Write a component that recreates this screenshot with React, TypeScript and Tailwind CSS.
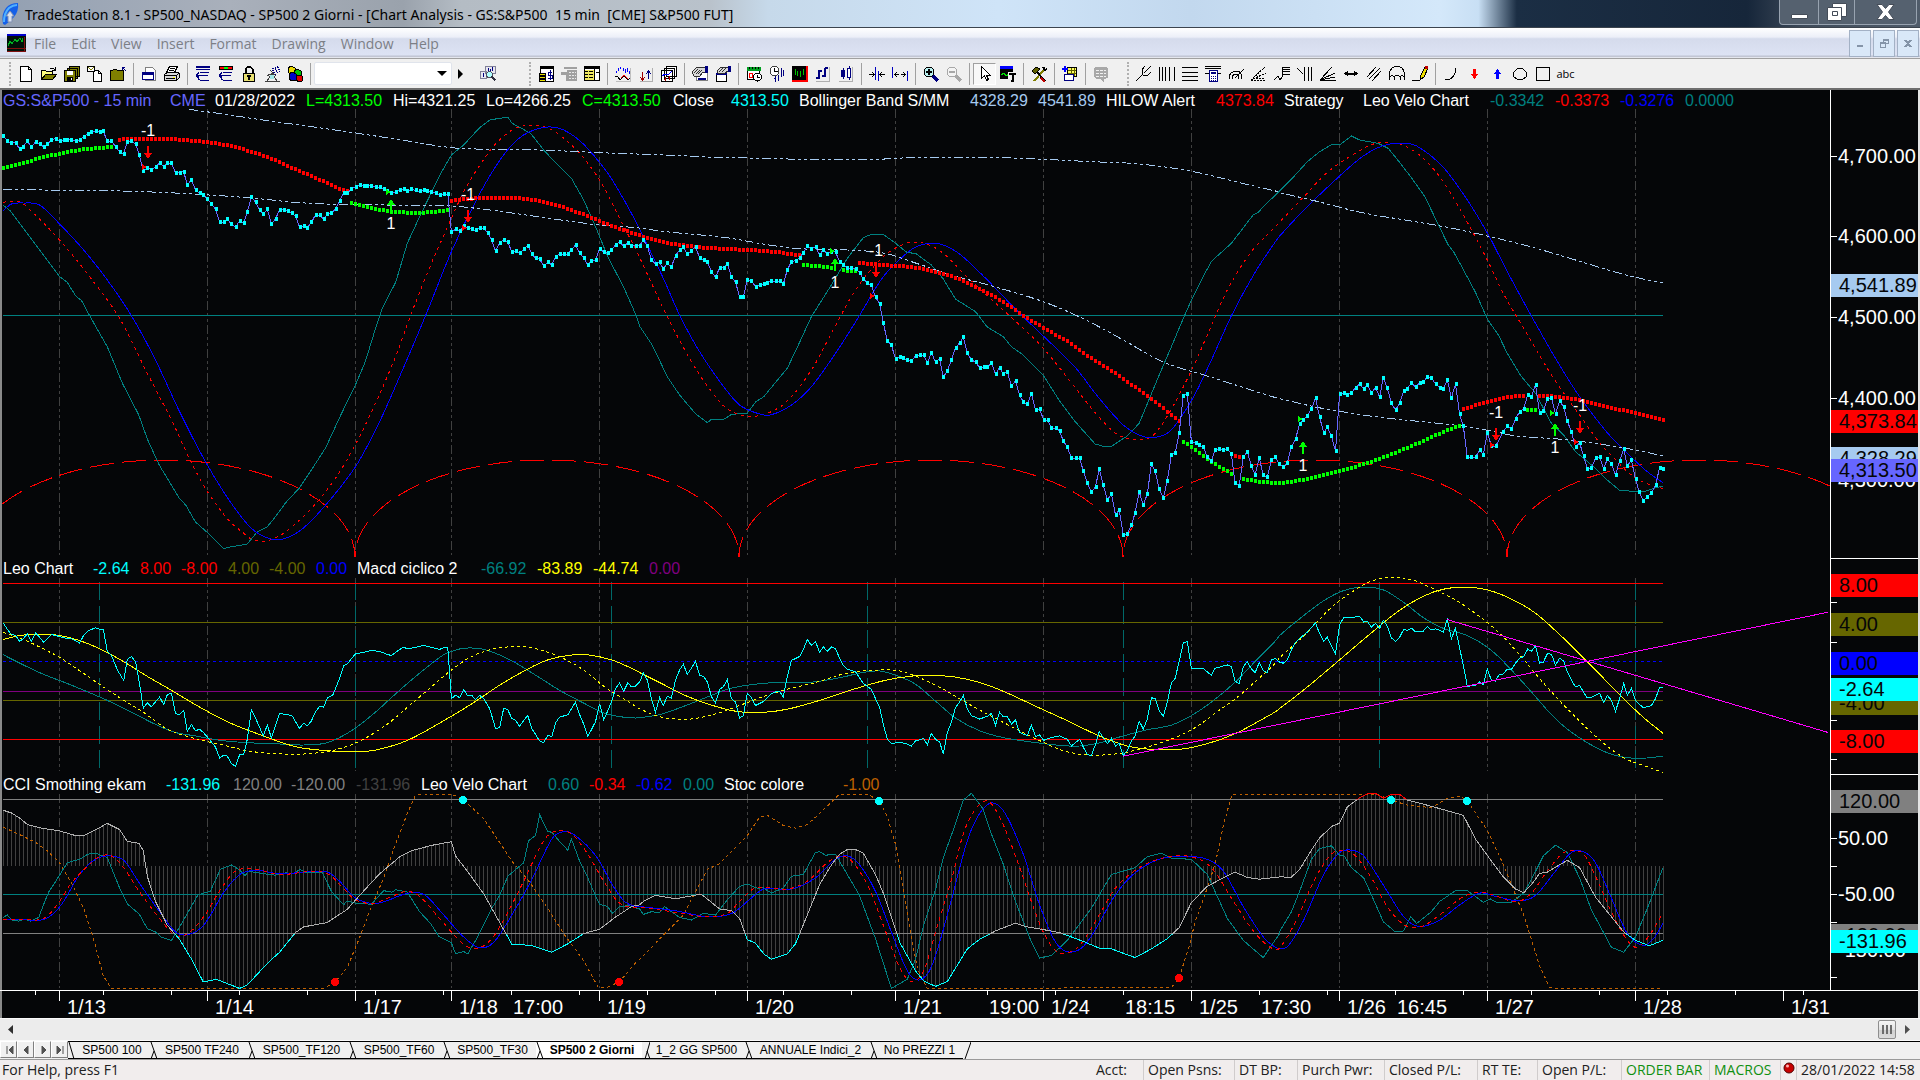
import { type ReactNode } from 'react'

type Point = [number, number];

// Series are kept in blocks of 1568 units, each block covers 640px of the time axis
const BLOCK = 1568;
const X_UNIT = 2.45;
const END_X = 1663;

interface Scale {
    unit: number;
    offset: number;
}

const PRICE: Scale = { unit: 3, offset: 19 };
const LEO: Scale = { unit: 2.9585, offset: 28 };
const CCI: Scale = { unit: 2.9585, offset: 244 };

const toY = (value: number, scale: Scale) => value / scale.unit - scale.offset;

const project = (blocks: string[], scale: Scale): Point[] =>
    blocks.flatMap((block, index) =>
        block.split(" ").filter(Boolean).map((pair): Point => {
            const [x, y] = pair.split(",").map(Number);
            return [(x + index * BLOCK) / X_UNIT, toY(y, scale)];
        })
    );

const straight = (points: Point[]) =>
    points.map(([x, y], i) => `${i ? "L" : "M"}${x.toFixed(1)} ${y.toFixed(1)}`).join("");

const smooth = (points: Point[]) => {
    let d = `M${points[0][0].toFixed(1)} ${points[0][1].toFixed(1)}`;
    for (let i = 0; i < points.length - 1; i++) {
        const p0 = points[i - 1] ?? points[i];
        const p1 = points[i];
        const p2 = points[i + 1];
        const p3 = points[i + 2] ?? p2;
        const third = (p2[0] - p1[0]) / 3;
        const s1 = (p2[1] - p0[1]) / (p2[0] - p0[0] || 1);
        const s2 = (p3[1] - p1[1]) / (p3[0] - p1[0] || 1);
        d += `C${(p1[0] + third).toFixed(1)} ${(p1[1] + s1 * third).toFixed(1)} ${(p2[0] - third).toFixed(1)} ${(p2[1] - s2 * third).toFixed(1)} ${p2[0].toFixed(1)} ${p2[1].toFixed(1)}`;
    }
    return d;
};

const valueAt = (points: Point[], x: number) => {
    const i = points.findIndex((p) => p[0] >= x);
    if (i <= 0) return points[i === 0 ? 0 : points.length - 1][1];
    const [x0, y0] = points[i - 1];
    const [x1, y1] = points[i];
    return y0 + ((y1 - y0) * (x - x0)) / (x1 - x0);
};

const closes = [
    "8,137 18,153 28,160 38,158 48,176 57,170 67,153 77,170 87,156 97,163 107,170 116,163 126,149 136,146 146,152 156,150 165,149 175,149 185,152 195,150 205,141 215,131 224,127 234,122 244,125 253,124 263,153 273,153 283,170 293,185 303,191 312,156 322,154 332,161 341,195 351,243 361,234 371,239 381,230 391,219 401,230 410,219 420,219 430,248 440,248 450,245 459,284 469,270 479,300 489,309 498,315 508,327 518,342 528,357 538,396 548,396 557,387 567,403 577,411 587,393 597,399 606,366 616,321 626,336 636,361 645,371 655,358 665,402 675,387 685,359 695,359 705,363 715,369 724,378 734,411 744,408 753,413 763,397 773,375 783,375 793,387 802,372 812,369 822,357 832,333 842,309 851,309 861,297 871,290 881,285 891,288 900,287 910,288 920,291 930,292 940,298 949,303 959,309 969,306 979,301 989,297 998,303 1008,298 1018,301 1028,304 1038,300 1047,303 1057,306 1067,309 1077,315 1087,312 1097,312 1106,426 1116,418 1126,422 1136,407 1146,415 1156,418 1165,421 1175,414 1185,415 1195,428 1205,450 1214,484 1224,459 1234,450 1244,456 1254,486 1263,483 1273,489 1283,478 1293,467 1303,492 1312,504 1322,507 1332,528 1342,516 1352,525 1361,501 1371,492 1381,493 1391,492 1400,480 1410,465 1420,489 1430,504 1440,524 1449,513 1459,510 1469,477 1479,485 1489,488 1498,480 1508,465 1518,456 1528,468 1538,459 1547,468 1557,467 1567,467",
    "8,450 18,468 28,510 38,522 48,516 57,537 67,520 77,531 87,497 97,480 106,471 116,492 126,483 136,470 146,503 156,510 165,515 175,545 185,561 195,534 205,533 214,521 224,560 234,576 244,621 253,621 263,569 273,573 283,590 293,586 303,582 312,578 322,573 332,573 342,573 351,582 361,540 371,515 381,512 391,503 400,489 410,467 420,477 430,470 440,495 449,479 459,492 469,485 479,486 489,515 498,525 508,534 518,534 528,537 538,548 547,567 557,579 567,585 577,621 587,642 596,699 606,752 616,765 626,807 636,800 645,804 655,810 665,813 675,798 685,795 695,795 704,819 714,788 724,816 734,806 743,862 753,843 763,810 773,773 783,759 792,741 802,788 812,810 822,816 832,833 842,831 851,831 861,819 871,852 881,833 890,852 900,846 910,887 920,873 930,915 939,936 949,942 959,912 969,960 979,957 989,990 999,990 1008,1014 1018,1014 1028,1022 1037,1053 1047,1071 1057,1104 1067,1104 1077,1104 1086,1143 1096,1179 1106,1206 1116,1191 1125,1136 1135,1185 1145,1230 1155,1212 1165,1275 1174,1260 1184,1335 1194,1332 1204,1305 1213,1269 1223,1206 1233,1245 1243,1212 1253,1122 1262,1143 1272,1197 1282,1224 1292,1173 1302,1095 1311,1089 1321,1029 1331,917 1341,912 1351,1056 1361,1058 1370,1065 1380,1071 1390,1101 1400,1113 1409,1080 1419,1077 1429,1080 1439,1077 1449,1092 1458,1180 1468,1188 1478,1101 1488,1085 1498,1128 1507,1155 1517,1104 1527,1155 1537,1161 1547,1110 1556,1101 1566,1122",
    "8,1131 18,1119 28,1071 38,1047 48,1002 57,990 67,978 77,957 87,924 97,981 107,1029 116,1011 126,1038 136,1083 146,912 156,909 165,915 175,909 185,893 195,882 205,896 214,885 224,909 234,893 244,921 253,863 263,894 273,939 283,960 293,939 303,903 312,896 322,878 332,891 342,879 351,876 361,860 371,863 381,882 391,893 400,897 410,870 420,923 430,882 440,972 449,1008 459,1101 469,1101 479,1101 489,1080 498,1095 508,1028 518,1068 528,1069 547,1026 557,1007 567,1017 577,987 587,965 597,957 607,914 616,920 626,885 636,969 645,963 655,927 665,924 675,972 685,933 695,951 704,993 714,1026 724,1071 734,1059 744,1098 753,1137 763,1134 773,1104 783,1101 793,1137 802,1107 812,1122 822,1155 832,1113 842,1077 851,1128 861,1110 871,1167 880,1206 890,1233 900,1220 910,1209 920,1185 930,1134 938,1137",
];

const upperBand = [
    "463,58 557,74 655,92 763,110 871,129 979,149 1106,173 1200,178 1322,180 1469,188 1560,192",
    "8,194 87,196 165,201 263,204 410,208 577,208 680,202 851,202 988,208 1106,215 1224,222 1351,244 1469,278 1560,304",
    "0,308 87,333 205,369 322,393 410,412 508,438 616,471 724,510 832,550 890,567 938,579",
];

const middleBand = [
    "8,298 107,300 263,302 391,307 499,314 616,324 734,338 861,344 1087,347 1175,356 1293,376 1410,396 1469,405 1560,413",
    "8,416 87,428 205,442 312,464 391,476 508,480 600,490 675,519 763,555 871,591 988,635 1086,686 1184,750 1282,816 1390,858 1469,889 1560,924",
    "0,926 87,951 156,966 253,983 440,1007 528,1025 577,1038 680,1047 783,1062 871,1080 938,1098",
];

const velo = [
    "8,346 25,362 48,400 97,480 146,560 165,577 185,617 200,632 220,678 263,770 300,880 340,975 361,1047 390,1125 440,1226 455,1245 479,1296 515,1335 548,1376 567,1370 605,1363 630,1326 655,1310 675,1280 700,1238 734,1193 763,1140 798,1073 835,975 871,884 895,815 915,735 935,660 970,575 998,460 1028,380 1080,250 1106,195 1136,165 1175,113 1200,90 1224,85 1244,82 1255,100 1300,130 1332,180 1361,218 1400,265 1430,330 1459,410 1489,500 1528,592 1560,680",
    "0,710 30,765 67,860 97,915 136,971 165,998 175,988 205,988 225,973 263,970 283,936 303,920 361,835 391,757 420,680 469,585 508,505 547,443 567,433 596,433 626,460 655,488 675,490 714,525 743,567 773,627 822,665 851,711 890,740 910,770 939,795 988,856 1028,933 1067,996 1115,1062 1135,1069 1155,1069 1194,1038 1223,1000 1272,855 1302,770 1326,700 1351,630 1385,548 1400,514 1449,460 1502,375 1515,367 1530,346 1560,312",
    "0,302 28,268 67,215 97,185 126,164 146,165 175,138 195,150 240,160 265,175 293,217 320,260 355,320 391,412 412,465 425,485 440,518 479,607 508,687 535,735 557,790 590,857 626,910 665,1000 695,1035 724,1085 773,1135 802,1170 832,1201 890,1206 920,1193 938,1189",
];

const veloFast = [
    "8,337 28,334 48,335 67,352 146,450 224,567 293,685 361,850 420,990 469,1118 508,1204 557,1286 597,1330 616,1347 655,1352 700,1325 763,1255 820,1168 871,1063 920,940 969,800 1008,670 1057,520 1106,385 1136,305 1175,227 1214,162 1263,115 1312,106 1341,114 1371,135 1420,190 1469,270 1508,360 1560,485",
    "0,505 67,680 136,835 195,935 225,965 268,979 312,970 361,933 420,840 469,730 528,600 596,500 645,463 675,457 704,463 743,490 802,562 861,628 939,715 988,775 1057,878 1106,955 1155,1020 1184,1042 1214,1049 1253,1040 1292,978 1351,842 1390,735 1439,600 1498,485 1555,412",
    "0,395 57,322 116,247 175,197 229,162 268,159 300,165 351,205 400,275 449,375 508,510 547,610 597,715 655,835 704,925 734,975 783,1058 822,1108 851,1145 890,1176 938,1196",
];

const veloSlow = [
    "8,362 28,342 57,339 97,345 146,402 205,480 263,570 322,677 381,810 440,965 508,1125 577,1258 626,1325 680,1349 734,1323 793,1252 871,1130 930,995 979,860 1045,670 1106,485 1165,335 1214,230 1254,165 1293,128 1342,111 1381,120 1430,163 1489,250 1528,328 1560,400",
    "8,440 57,565 99,680 146,785 205,890 244,945 293,972 322,974 371,945 420,890 479,790 537,678 596,560 655,488 690,464 734,462 783,492 851,570 930,670 988,738 1067,833 1125,925 1184,1005 1223,1035 1253,1043 1292,1030 1321,990 1361,910 1400,810 1450,675 1508,545 1555,458",
    "0,437 57,362 146,258 205,197 250,168 293,160 335,168 400,232 459,330 512,438 557,545 616,678 675,805 734,920 802,1028 851,1090 900,1145 938,1178",
];

const redTrails = [
    ["283,150 303,148 361,147 410,147 450,150 508,156 557,166 616,185 665,206 724,239 773,264 832,297 853,303"],
    ["1103,333 1146,326 1205,323 1263,324 1322,333 1371,348 1430,374 1489,404 1538,425 1567,437", "8,441 57,457 116,468 156,473 205,477 273,480 332,486 394,496"],
    ["", "535,519 596,525 665,531 714,542 773,563 832,597 890,636 939,678 988,714 1047,755 1106,806 1174,858 1233,910 1282,956 1324,997"],
    ["", "1456,1097 1473,1102"],
    ["", "", "445,959 498,938 547,923 600,916"],
    ["", "", "632,917 665,919 714,926 763,939 812,954 871,969 942,990"],
];

const greenTrails = [
    ["4,234 57,218 107,201 156,188 205,178 277,170"],
    ["857,338 910,354 959,366 1018,369 1067,366 1100,360"],
    ["", "397,524 430,528 469,534"],
    ["", "494,541 532,545"],
    ["", "1327,1053 1361,1080 1400,1116 1452,1154"],
    ["", "1474,1166 1517,1176 1560,1179", "0,1179 28,1176 77,1164 146,1143 205,1122 263,1098 322,1068 371,1041 410,1020 443,1006"],
    ["", "", "603,960 630,960"],
];

const leoLine = [
    "8,216 18,235 28,250 38,252 48,270 57,262 67,248 77,270 87,245 97,258 107,273 116,262 126,250 140,254 156,260 175,262 195,275 205,252 215,240 234,230 244,234 253,235 263,300 273,312 288,356 303,386 312,324 322,315 332,330 341,390 351,468 361,452 371,464 391,435 401,457 410,428 420,424 430,485 440,486 450,474 459,537 469,516 479,535 489,530 498,540 508,553 518,568 528,583 538,615 548,607 557,610 567,632 577,640 587,606 597,605 606,560 616,472 626,497 645,550 655,518 665,556 675,520 685,483 700,487 715,489 734,528 744,512 753,520 763,506 773,478 783,463 793,465 802,438 815,430 832,380 842,343 851,337 871,307 890,303 910,297 930,300 949,309 959,312 969,303 989,287 998,293 1018,288 1038,282 1057,288 1077,294 1087,289 1097,290 1106,440 1116,430 1126,437 1136,412 1146,432 1156,430 1165,443 1175,430 1185,440 1200,470 1214,528 1224,526 1234,468 1244,473 1254,498 1263,504 1273,522 1283,504 1293,490 1303,528 1312,545 1322,565 1332,570 1342,548 1352,553 1361,512 1371,494 1391,488 1410,450 1420,487 1430,515 1440,550 1449,532 1459,508 1469,455 1479,503 1489,475 1498,450 1508,410 1518,394 1528,418 1538,393 1547,405 1557,403 1567,390",
    "2,383 8,363 18,385 28,440 38,480 48,437 57,460 67,433 77,438 87,385 97,355 106,338 116,368 126,350 136,330 146,370 156,375 165,390 175,433 185,453 195,413 205,403 214,384 224,440 234,450 244,497 253,490 263,424 273,437 283,460 303,448 322,425 332,420 342,418 351,435 361,375 371,327 391,315 400,295 410,265 420,282 430,270 440,303 449,286 459,300 469,287 479,292 489,320 498,342 508,353 528,360 547,395 567,412 577,440 587,465 596,515 606,560 616,573 636,569 655,574 665,580 675,565 695,558 704,576 714,543 724,560 734,568 743,603 753,540 763,510 773,466 783,450 792,430 802,470 812,490 832,500 851,492 861,483 871,518 881,480 890,494 900,492 910,515 920,503 930,540 949,549 959,517 969,552 979,547 989,563 1008,555 1028,550 1047,560 1057,580 1077,560 1086,583 1096,605 1106,608 1116,575 1125,537 1135,555 1145,573 1155,557 1165,580 1174,572 1184,608 1194,593 1204,565 1213,550 1223,506 1233,530 1243,500 1253,437 1262,440 1272,475 1282,492 1292,450 1302,393 1311,380 1321,330 1331,275 1341,270 1351,350 1380,351 1400,371 1409,350 1439,340 1449,345 1458,388 1468,395 1478,345 1488,330 1498,352 1507,363 1517,333 1527,357 1537,362 1547,325 1556,321 1567,332",
    "8,335 18,325 28,295 38,273 48,262 67,243 87,216 97,247 107,270 116,258 136,308 146,220 156,200 175,200 195,196 205,213 214,211 224,228 234,217 244,232 253,208 263,225 273,260 283,270 293,258 303,235 312,238 322,231 332,242 351,240 361,227 371,236 381,233 391,237 400,243 410,205 420,262 430,232 440,290 449,340 459,403 479,401 489,390 498,398 508,353 518,385 528,388 537,368 547,367 557,352 567,353 577,335 587,320 597,315 607,293 616,300 626,283 636,335 645,332 655,307 665,308 675,340 685,320 695,328 704,360 714,385 724,405 734,400 744,422 753,438 763,436 773,430 783,424 793,451 802,430 812,445 822,477 832,440 842,395 851,430 861,410 871,445 890,467 910,460 920,440 930,406 938,406",
];

const macdSlow = [
    "8,265 48,253 97,249 146,253 195,268 244,292 300,328 361,374 420,415 479,458 557,508 645,550 724,582 793,593 861,597 920,592 1000,562 1087,505 1156,455 1224,400 1293,352 1342,325 1400,311 1440,310 1498,325 1555,354",
    "0,363 48,392 106,428 165,455 234,477 293,481 361,471 440,445 518,414 596,387 665,373 714,371 773,376 832,392 890,418 969,462 1047,505 1125,550 1194,580 1253,590 1321,590 1390,573 1459,543 1518,505 1555,480",
    "0,468 57,415 146,325 224,245 293,178 351,137 400,116 449,110 508,118 567,145 626,187 685,250 734,308 793,380 842,440 890,495 938,542",
];

const macdFast = [
    "8,244 48,260 97,287 146,318 195,357 244,398 293,437 351,480 410,530 479,558 557,580 616,596 705,604 773,601 832,588 890,560 949,515 1008,455 1057,405 1106,355 1156,315 1205,294 1254,286 1303,289 1371,316 1430,355 1479,403 1528,440 1555,461",
    "0,470 38,490 77,499 126,500 185,485 244,460 303,433 361,412 430,392 498,367 547,358 626,356 675,373 743,412 812,460 890,510 959,552 1028,590 1077,604 1125,607 1184,600 1243,583 1311,555 1361,525 1410,482 1459,440 1507,390 1555,337",
    "0,318 57,255 126,170 175,125 224,92 273,81 322,88 371,112 430,148 479,188 537,245 587,310 645,393 704,470 763,540 812,590 851,620 890,637 938,658",
];

const macdCycle = [
    "8,310 57,340 107,368 165,395 215,420 263,445 322,480 381,516 430,540 479,550 538,563 606,570 685,574 744,577 802,570 861,535 910,490 959,437 998,395 1047,346 1087,310 1126,293 1156,290 1195,297 1254,328 1312,370 1371,415 1430,453 1479,482 1518,493 1555,497",
    "0,496 48,487 106,463 165,435 214,412 263,400 322,393 420,391 489,378 547,362 587,358 626,370 675,397 724,447 773,497 832,535 890,555 959,568 1028,578 1077,580 1135,568 1184,550 1243,532 1302,518 1351,490 1400,450 1459,390 1507,330 1555,271",
    "0,252 57,195 107,150 156,120 205,110 253,118 303,155 351,200 400,232 459,253 518,297 567,355 616,420 665,487 704,530 753,570 802,600 842,613 890,616 938,610",
];

const cciLine = [
    "8,770 28,778 48,793 67,812 97,822 146,831 185,845 205,845 234,828 263,809 293,827 312,862 341,868 351,890 361,965 381,1040 410,1110 440,1152 469,1210 498,1278 530,1270 587,1297 606,1287 655,1223 685,1190 724,1132 744,1115 802,1102 851,1063 890,1010 930,958 979,908 1008,890 1057,874 1106,863 1116,905 1146,952 1185,1017 1214,1080 1254,1166 1303,1170 1352,1190 1391,1165 1430,1135 1469,1122 1508,1086 1547,1055 1567,1050",
    "8,1040 38,1022 87,1032 150,1018 195,1062 224,1067 244,1090 263,1153 283,1163 303,1195 322,1211 361,1195 381,1165 410,1080 440,990 469,932 489,900 508,886 528,886 547,897 577,960 596,1015 636,1160 675,1245 695,1275 724,1291 753,1277 802,1180 832,1152 871,1127 920,1104 949,1115 988,1123 1028,1132 1086,1158 1125,1178 1155,1180 1213,1206 1253,1180 1292,1150 1321,1117 1351,1043 1390,995 1429,970 1458,953 1488,969 1517,974 1567,967",
    "28,968 48,945 77,888 97,852 126,818 146,808 165,760 195,733 215,720 235,721 253,734 273,723 293,723 312,740 361,755 400,768 449,785 479,855 518,920 547,967 577,1003 597,1014 616,990 636,957 655,953 704,918 734,940 773,1027 802,1070 842,1130 871,1155 905,1171 938,1155",
];

const cciVelo = [
    "8,1087 18,1080 30,1095 45,1098 60,1092 75,1098 95,1087 107,1048 120,1010 134,985 165,925 195,915 215,900 234,897 263,910 293,1000 312,1047 341,1077 361,1120 381,1130 395,1145 420,1155 445,1105 485,1020 515,1010 540,945 567,932 585,945 600,963 610,950 630,955 675,962 700,955 720,958 734,945 750,955 790,955 812,1010 842,1050 850,1038 871,1045 910,1048 940,1008 960,1012 970,1005 998,1012 1028,1070 1055,1105 1075,1143 1106,1162 1116,1194 1136,1188 1146,1195 1170,1145 1205,1060 1225,1020 1244,965 1283,925 1295,860 1312,845 1322,783 1342,833 1352,835 1371,862 1391,888 1400,855 1420,920 1440,970 1459,1023 1469,1048 1489,1055 1500,1075 1518,1055 1540,1052 1567,1062",
    "8,1078 28,1070 48,1073 60,1055 77,1070 97,1087 126,1095 155,1075 185,1080 214,1035 244,995 263,988 290,1002 300,998 322,1015 351,1000 371,965 400,960 430,895 440,893 455,903 479,900 508,960 537,1020 577,1150 616,1297 655,1270 675,1210 695,1110 724,1005 743,910 773,810 792,740 812,720 840,765 861,840 890,930 920,1040 959,1160 979,1207 1008,1200 1047,1155 1106,1060 1155,960 1213,940 1243,907 1278,897 1302,912 1351,915 1390,960 1439,1090 1478,1155 1527,1206 1567,1135",
    "0,1127 28,1070 48,1010 77,915 97,883 126,875 146,903 156,903 175,940 205,970 224,1020 253,1100 283,1130 303,1127 320,1085 335,1105 371,1070 391,1040 430,1008 459,1008 498,1042 515,1032 530,1042 567,1042 597,1015 616,975 645,905 675,873 704,895 734,970 763,1065 812,1175 842,1190 871,1145 905,1045 938,940",
];

const cciVeloFast = [
    "8,1093 60,1094 107,1090 140,1050 175,985 215,935 244,907 273,905 303,940 341,1010 391,1090 430,1140 460,1135 499,1085 540,1005 577,950 626,945 685,960 780,950 812,965 840,1000 871,1035 915,1045 960,1025 998,1010 1028,1025 1077,1090 1130,1160 1165,1180 1205,1150 1245,1070 1283,980 1332,860 1361,832 1400,840 1440,900 1479,980 1518,1045 1560,1058",
    "0,1057 77,1070 165,1085 214,1075 244,1040 283,1000 361,1003 410,980 459,925 489,905 518,920 557,990 596,1110 636,1235 665,1277 695,1245 724,1130 763,975 792,840 820,770 851,743 881,790 920,905 959,1040 988,1130 1018,1185 1045,1192 1077,1170 1125,1080 1165,1000 1223,940 1292,908 1351,908 1400,940 1449,1030 1498,1120 1537,1170 1555,1180",
    "0,1177 38,1100 87,970 126,900 156,888 185,905 224,970 263,1055 303,1108 342,1116 391,1080 450,1025 498,1014 580,1040 616,1015 655,950 690,900 714,890 744,900 773,965 812,1070 851,1155 875,1175 905,1140 938,1073",
];

const cciVeloSlow = [
    "8,1094 60,1094 110,1092 150,1050 195,960 234,915 273,905 305,920 341,985 391,1070 430,1130 460,1138 499,1110 550,1010 590,958 630,948 685,958 800,952 832,980 871,1030 925,1045 1000,1015 1040,1020 1080,1070 1136,1145 1175,1177 1210,1160 1254,1080 1303,975 1352,855 1381,833 1410,845 1460,905 1500,990 1530,1040 1560,1055",
    "0,1055 90,1068 165,1085 225,1075 263,1040 303,1003 371,1003 430,970 479,915 508,905 537,930 577,1010 616,1130 655,1245 685,1272 715,1230 753,1080 802,860 832,780 863,748 895,780 939,900 979,1050 1018,1160 1055,1190 1096,1160 1165,1020 1213,955 1272,915 1331,906 1390,915 1429,950 1478,1055 1527,1145 1555,1174",
    "0,1179 20,1172 58,1095 107,960 146,895 175,888 205,905 263,1010 303,1085 340,1114 391,1095 440,1050 490,1015 530,1025 587,1038 626,1022 675,950 714,895 744,893 773,925 812,1030 851,1135 890,1170 915,1150 938,1105",
];

const stoc = [
    "8,820 48,842 87,865 116,890 146,925 175,985 205,1060 229,1150 253,1260 273,1297 793,1297 822,1277 851,1235 880,1150 905,1070 940,970 969,870 998,780 1018,725 1040,722 1106,722 1136,739 1185,795 1224,865 1254,920 1293,975 1342,1060 1381,1135 1430,1215 1465,1293 1490,1293 1518,1277 1560,1218",
    "0,1210 106,1080 165,945 195,928 263,845 293,790 312,785 351,815 381,823 410,812 440,780 489,722 557,722 587,743 606,790 626,870 645,1000 665,1150 680,1240 704,1297 1302,1295 1321,1265 1346,1170 1360,1100 1390,1000 1410,925 1430,810 1450,725 1470,722 1560,722",
    "0,722 235,722 273,740 312,755 371,762 410,735 440,728 459,742 508,830 547,930 577,1020 597,1080 636,1230 660,1293 675,1297 938,1297",
];

const days = [59, 207, 355, 451, 599, 747, 895, 1043, 1191, 1339, 1487, 1635];
const cycles = [99, 355, 611, 867, 1123, 1379, 1635];
const minorTicks = Array.from({ length: 27 }, (_, i) => 35 + i * 68);

const timeLabels: [number, string][] = [
    [67, "1/13"], [215, "1/14"], [363, "1/17"], [459, "1/18"], [513, "17:00"], [607, "1/19"],
    [755, "1/20"], [903, "1/21"], [989, "19:00"], [1051, "1/24"], [1125, "18:15"], [1199, "1/25"],
    [1261, "17:30"], [1347, "1/26"], [1397, "16:45"], [1495, "1/27"], [1643, "1/28"], [1791, "1/31"],
];

interface Reading {
    text: string;
    className: string;
}

const priceReadings: Reading[] = [
    { text: "GS:S&P500 - 15 min", className: "w-[167px] text-[#6666ff]" },
    { text: "CME", className: "w-[45px] text-[#6666ff]" },
    { text: "01/28/2022", className: "w-[91px] text-white" },
    { text: "L=4313.50", className: "w-[87px] text-[#00ff00]" },
    { text: "Hi=4321.25", className: "w-[93px] text-white" },
    { text: "Lo=4266.25", className: "w-[96px] text-white" },
    { text: "C=4313.50", className: "w-[91px] text-[#00ff00]" },
    { text: "Close", className: "w-[58px] text-white" },
    { text: "4313.50", className: "w-[68px] text-[#00ffff]" },
    { text: "Bollinger Band S/MM", className: "w-[171px] text-white" },
    { text: "4328.29", className: "w-[68px] text-[#a6caf0]" },
    { text: "4541.89", className: "w-[68px] text-[#a6caf0]" },
    { text: "HILOW Alert", className: "w-[110px] text-white" },
    { text: "4373.84", className: "w-[68px] text-[#ff0000]" },
    { text: "Strategy", className: "w-[79px] text-white" },
    { text: "Leo Velo Chart", className: "w-[127px] text-white" },
    { text: "-0.3342", className: "w-[65px] text-[#008080]" },
    { text: "-0.3373", className: "w-[65px] text-[#ff0000]" },
    { text: "-0.3276", className: "w-[65px] text-[#0000ff]" },
    { text: "0.0000", className: "w-[65px] text-[#008080]" },
];

const leoReadings: Reading[] = [
    { text: "Leo Chart", className: "w-[90px] text-white" },
    { text: "-2.64", className: "w-[47px] text-[#00ffff]" },
    { text: "8.00", className: "w-[41px] text-[#ff0000]" },
    { text: "-8.00", className: "w-[47px] text-[#ff0000]" },
    { text: "4.00", className: "w-[41px] text-[#666600]" },
    { text: "-4.00", className: "w-[47px] text-[#666600]" },
    { text: "0.00", className: "w-[41px] text-[#0000ff]" },
    { text: "Macd ciclico 2", className: "w-[124px] text-white" },
    { text: "-66.92", className: "w-[56px] text-[#008080]" },
    { text: "-83.89", className: "w-[56px] text-[#ffff00]" },
    { text: "-44.74", className: "w-[56px] text-[#ffff00]" },
    { text: "0.00", className: "w-[41px] text-[#800080]" },
];

const cciReadings: Reading[] = [
    { text: "CCI Smothing ekam", className: "w-[163px] text-white" },
    { text: "-131.96", className: "w-[67px] text-[#00ffff]" },
    { text: "120.00", className: "w-[58px] text-[#808080]" },
    { text: "-120.00", className: "w-[65px] text-[#808080]" },
    { text: "-131.96", className: "w-[65px] text-[#404040]" },
    { text: "Leo Velo Chart", className: "w-[127px] text-white" },
    { text: "0.60", className: "w-[41px] text-[#008080]" },
    { text: "-0.34", className: "w-[47px] text-[#ff0000]" },
    { text: "-0.62", className: "w-[47px] text-[#0000ff]" },
    { text: "0.00", className: "w-[41px] text-[#008080]" },
    { text: "Stoc colore", className: "w-[119px] text-white" },
    { text: "-1.00", className: "w-[47px] text-[#bf6000]" },
];

const Readings = ({ items, className }: { items: Reading[]; className: string }) => (
    <div className={`flex h-[19px] items-center pl-[3px] text-[16px] whitespace-nowrap ${className}`}>
        {items.map((item, i) => (
            <span key={i} className={`shrink-0 ${item.className}`}>{item.text}</span>
        ))}
    </div>
);

const DayLines = ({ bottom }: { bottom: number }) => (
    <g stroke="#404040" strokeDasharray="9 3 3 3 3 3">
        {days.map((x) => <line key={x} x1={x + 0.5} x2={x + 0.5} y1="0" y2={bottom} />)}
    </g>
);

const Level = ({ at, scale, stroke, dash }: { at: number; scale: Scale; stroke: string; dash?: string }) => {
    const y = Math.floor(toY(at, scale)) + 0.5;
    return <line x1="3" x2={END_X} y1={y} y2={y} stroke={stroke} strokeDasharray={dash} />;
};

const Trail = ({ blocks, fill }: { blocks: string[]; fill: string }) => {
    const points = project(blocks, PRICE);
    const first = Math.ceil((points[0][0] - 3) / 4);
    const last = Math.floor((points[points.length - 1][0] - 3) / 4);
    return (
        <g fill={fill}>
            {Array.from({ length: last - first + 1 }, (_, i) => {
                const x = 3 + (first + i) * 4;
                return <rect key={x} x={x - 1} y={Math.round(valueAt(points, x)) - 2} width="3" height="4" />;
            })}
        </g>
    );
};

const signals: { x: number; y: number; labelY: number; up: boolean }[] = [
    { x: 148, y: 37, labelY: 27, up: false },
    { x: 468, y: 101, labelY: 91, up: false },
    { x: 876, y: 156, labelY: 147, up: false },
    { x: 1496, y: 319, labelY: 309, up: false },
    { x: 1580, y: 312, labelY: 302, up: false },
    { x: 391, y: 90, labelY: 120, up: true },
    { x: 835, y: 149, labelY: 179, up: true },
    { x: 1303, y: 332, labelY: 362, up: true },
    { x: 1555, y: 314, labelY: 344, up: true },
];

const entries: [number, number, string][] = [
    [142, 58, "#f00"], [462, 119, "#f00"], [870, 187, "#f00"], [1490, 336, "#f00"], [1574, 333, "#f00"],
    [386, 83, "#0f0"], [830, 142, "#0f0"], [1298, 310, "#0f0"], [1550, 304, "#0f0"],
];

const PricePlot = () => {
    const points = project(closes, PRICE);
    return (
        <svg className="block h-[450px] w-full" shapeRendering="crispEdges" fill="none" role="img" aria-label="S&P500 15 minute closes">
            <DayLines bottom={446} />
            <Level at={677} scale={PRICE} stroke="#008080" />
            <path d="M-29 448A192 97 0 0 1 355 448A192 97 0 0 1 739 448A192 97 0 0 1 1123 448A192 97 0 0 1 1507 448A192 97 0 0 1 1891 448" stroke="#f00" strokeDasharray="24 8" />
            <path d={straight(project(velo, PRICE))} stroke="#008080" />
            <path d={smooth(project(veloFast, PRICE))} stroke="#f00" strokeDasharray="3 4" />
            <path d={smooth(project(veloSlow, PRICE))} stroke="#00f" />
            <path d={smooth(project(upperBand, PRICE))} stroke="#a6caf0" strokeDasharray="9 3 3 3 3 3" />
            <path d={smooth(project(middleBand, PRICE))} stroke="#a6caf0" strokeDasharray="9 3 3 3 3 3" />
            {redTrails.map((trail, i) => <Trail key={i} blocks={trail} fill="#f00" />)}
            {greenTrails.map((trail, i) => <Trail key={i} blocks={trail} fill="#0f0" />)}
            <path d={straight(points)} stroke="#6666ff" />
            {points.map(([x, y], i) => (
                <rect key={i} x={Math.round(x) - 1} y={Math.round(y) - 2} width="3" height="4" fill="#0ff" />
            ))}
            {entries.map(([x, y, color]) => (
                <path key={x} d={`M${x} ${y - 3}l5 3-5 3z`} fill={color} />
            ))}
            {signals.map((signal) => (
                <g key={signal.x}>
                    {signal.up
                        ? <path d={`M${signal.x} ${signal.y}l4 6h-3v7h-2v-7h-3z`} fill="#0f0" />
                        : <path d={`M${signal.x} ${signal.y + 13}l4-6h-3v-7h-2v7h-3z`} fill="#f00" />}
                    <text x={signal.x} y={signal.labelY} fill="#fff" fontSize="16" textAnchor="middle">{signal.up ? "1" : "-1"}</text>
                </g>
            ))}
        </svg>
    );
};

const LeoPlot = () => (
    <svg className="block h-[197px] w-full overflow-visible" shapeRendering="crispEdges" fill="none" role="img" aria-label="Leo Chart and Macd ciclico">
        <DayLines bottom={193} />
        <g stroke="#006868" strokeDasharray="18 6">
            {cycles.map((x) => <line key={x} x1={x + 0.5} x2={x + 0.5} y1="4" y2="190" />)}
        </g>
        <Level at={99} scale={LEO} stroke="#f00" />
        <Level at={214} scale={LEO} stroke="#666600" />
        <Level at={329} scale={LEO} stroke="#00f" dash="3 3" />
        <Level at={418} scale={LEO} stroke="#800080" />
        <Level at={445} scale={LEO} stroke="#666600" />
        <Level at={560} scale={LEO} stroke="#f00" />
        <path d={smooth(project(macdCycle, LEO))} stroke="#008080" />
        <path d={smooth(project(macdFast, LEO))} stroke="#ff0" strokeDasharray="3 3" />
        <path d={smooth(project(macdSlow, LEO))} stroke="#ff0" />
        <path d={straight(project(leoLine, LEO))} stroke="#0ff" />
        <path d={straight(project(["", "1184,610", "1343,184"], LEO))} stroke="#f0f" />
        <path d={straight(project(["", "", "410,206 1343,540"], LEO))} stroke="#f0f" />
    </svg>
);

const CciPlot = () => {
    const line = project(cciLine, CCI);
    const zero = Math.floor(toY(937, CCI));
    const bars = Array.from({ length: 416 }, (_, i) => 3 + i * 4);
    const dots: [number, number, string][] = [
        [463, 739, "#0ff"], [879, 742, "#0ff"], [1391, 739, "#0ff"], [1467, 742, "#0ff"],
        [335, 1277, "#f00"], [619, 1277, "#f00"], [1179, 1266, "#f00"],
    ];
    return (
        <svg className="block h-[196px] w-full overflow-visible" shapeRendering="crispEdges" fill="none" role="img" aria-label="CCI Smothing ekam">
            <clipPath id="oversold"><rect x="0" y={toY(1137, CCI)} width="1800" height="80" /></clipPath>
            <clipPath id="overbought"><rect x="0" y="-6" width="1800" height={toY(738, CCI) + 6} /></clipPath>
            <DayLines bottom={194} />
            <g stroke="#404040">
                {bars.map((x) => <line key={x} x1={x + 0.5} x2={x + 0.5} y1={zero} y2={valueAt(line, x)} />)}
            </g>
            <Level at={739} scale={CCI} stroke="#808080" />
            <Level at={1019} scale={CCI} stroke="#008080" />
            <Level at={1134} scale={CCI} stroke="#808080" />
            <path d={straight(project(stoc, CCI))} stroke="#bf6000" strokeDasharray="3 3" />
            <path d={straight(project(cciVelo, CCI))} stroke="#008080" />
            <path d={smooth(project(cciVeloSlow, CCI))} stroke="#00f" />
            <path d={smooth(project(cciVeloFast, CCI))} stroke="#f00" strokeDasharray="4 4" />
            <path d={straight(line)} stroke="#b0b0b0" />
            <path d={straight(line)} stroke="#0ff" clipPath="url(#oversold)" />
            <path d={straight(line)} stroke="#f00" clipPath="url(#overbought)" />
            {dots.map(([x, y, color]) => (
                <circle key={x} cx={x} cy={Math.round(toY(y, CCI))} r="4" fill={color} />
            ))}
        </svg>
    );
};

interface Tag {
    at: number;
    text?: string;
    box?: string;
}

const priceTags: Tag[] = [
    { at: 66, text: "4,700.00" },
    { at: 146, text: "4,600.00" },
    { at: 227, text: "4,500.00" },
    { at: 308, text: "4,400.00" },
    { at: 390, text: "4,300.00" },
    { at: 195, text: "4,541.89", box: "bg-[#a6caf0]" },
    { at: 331, text: "4,373.84", box: "bg-[#ff0000]" },
    { at: 368, text: "4,328.29", box: "bg-[#a6caf0]" },
    { at: 380, text: "4,313.50", box: "bg-[#6666ff]" },
];

const leoTags: Tag[] = [
    { at: 43 }, { at: 83 }, { at: 161 }, { at: 200 },
    { at: 26, text: "8.00", box: "bg-[#ff0000]" },
    { at: 65, text: "4.00", box: "bg-[#666600]" },
    { at: 104, text: "0.00", box: "bg-[#0000ff]" },
    { at: 144, text: "-4.00", box: "bg-[#666600]" },
    { at: 130, text: "-2.64", box: "bg-[#00ffff]" },
    { at: 182, text: "-8.00", box: "bg-[#ff0000]" },
];

const cciTags: Tag[] = [
    { at: 63, text: "50.00" },
    { at: 91 },
    { at: 119, text: "-50.00" },
    { at: 147 },
    { at: 175, text: "-150.00" },
    { at: 202 },
    { at: 26, text: "120.00", box: "bg-[#808080]" },
    { at: 160, text: "-120.00", box: "bg-[#808080]" },
    { at: 166, text: "-131.96", box: "bg-[#00ffff]" },
];

const Axis = ({ tags, className }: { tags: Tag[]; className: string }) => (
    <div className={`relative w-[88px] shrink-0 overflow-hidden border-l border-white text-[20px] leading-[23px] ${className}`}>
        {tags.map((tag, i) => tag.box ? (
            <div key={i} style={{ top: tag.at - 11 }} className={`absolute inset-x-0 h-[23px] pl-[8px] text-[#050608] ${tag.box}`}>{tag.text}</div>
        ) : (
            <div key={i} style={{ top: tag.at - 11 }} className="absolute inset-x-0 flex h-[23px] items-center text-white">
                <span className="h-px w-[6px] bg-white" />
                {tag.text && <span className="pl-px">{tag.text}</span>}
            </div>
        ))}
    </div>
);

const TimeAxis = () => (
    <svg className="block h-[27px] w-full" shapeRendering="crispEdges">
        <g stroke="#fff">
            {minorTicks.map((x) => <line key={x} x1={x + 0.5} x2={x + 0.5} y1="0" y2="4" />)}
            {[...days, 1783].map((x) => <line key={x} x1={x + 0.5} x2={x + 0.5} y1="0" y2="10" />)}
        </g>
        <g fill="#fff" fontSize="20">
            {timeLabels.map(([x, text]) => <text key={x} x={x} y="23">{text}</text>)}
        </g>
    </svg>
);

const olive = "#808000";
const navy = "#000080";

const icons: Record<string, ReactNode> = {
    new: <path d="M2.5.5h8l3 3v12h-11zM10.5.5v3h3" fill="#fff" stroke="#000" />,
    open: <>
        <path d="M.5 13.5v-9h4l1 1h6v3" fill="#ffff80" stroke="#000" />
        <path d="M.5 13.5l4-5h11l-4 5z" fill={olive} stroke="#000" />
        <path d="M9 2h3l2 2M14 1v3h-3" fill="none" stroke="#000" />
    </>,
    saveAll: <>
        <path d="M5.5.5h10v10h-10zM3.5 2.5h10v10h-10z" fill={olive} stroke="#000" />
        <path d="M.5 4.5h11v11H.5z" fill={olive} stroke="#000" />
        <path d="M3 5h6v4H3z" fill="#fff" />
        <path d="M3 11h6v4H3z" fill="#000" />
        <path d="M7 12h1v2H7z" fill="#fff" />
    </>,
    mail: <>
        <path d="M6.5 4.5h5l3 3v8h-8z" fill="#fff" stroke="#000" />
        <path d="M11.5 4.5v3h3" fill="none" stroke="#000" />
        <path d="M.5.5h7v5h-7z" fill="#fff" stroke="#000" />
        <path d="M1 1l3 3 3-3" fill="none" stroke={olive} />
    </>,
    folderUp: <>
        <path d="M.5 14.5v-10h2l1-1h3l1 1h6v10z" fill={olive} stroke="#000" />
        <path d="M12 1h3M12 1v3M12 1l4 4" fill="none" stroke={navy} />
    </>,
    window: <>
        <path d="M4.5 1.5h7l3 3v10h-10z" fill="#fff" stroke="#808080" />
        <path d="M1.5 6.5h11v7h-11z" fill="#fff" stroke={navy} />
        <path d="M1 6h12v3H1z" fill={navy} />
    </>,
    print: <>
        <path d="M5.5.5h8l-3 6h-8z" fill="#fff" stroke="#000" />
        <path d="M6 2.5h5M5 4.5h5" stroke="#000" />
        <path d="M.5 8.5l3-2h11l1 2v3l-3 3H.5z" fill="#d8d8d8" stroke="#000" />
        <path d="M1 9.5h11l3-2M2 12.5h9M12.5 10v4" fill="none" stroke="#000" />
        <path d="M9 11h2v1H9z" fill="#ff0" />
    </>,
    insertBack: <>
        <path d="M1 0h14v2H1zM1 3h14v1H1z" fill={navy} />
        <path d="M5 6.5h9M5 14.5h9M1 9.5h12M1 9.5l3-3M1 9.5l3 3M3.5 10v3l2 1.5" fill="none" stroke={navy} />
    </>,
    insertFlags: <>
        <path d="M1 0h14v4H1z" fill="#000" />
        <path d="M2 1h4v2H2z" fill="#f00" />
        <path d="M6 1h4v2H6z" fill="#0f0" />
        <path d="M10 1h4v2h-4z" fill="#f00" />
        <path d="M5 6.5h9M5 14.5h9M1 9.5h12M1 9.5l3-3M1 9.5l3 3M3.5 10v3l2 1.5" fill="none" stroke={navy} />
    </>,
    lock: <>
        <path d="M4.5 7V3l2-2h3l2 2v4" fill="none" stroke="#000" strokeWidth="2" />
        <path d="M2.5 7.5h11v8h-11z" fill="#e8e070" stroke="#000" />
        <path d="M6 9h4v2H9v3H7v-3H6z" fill="#000" />
    </>,
    dish: <>
        <path d="M8 3l6-3M8 5l7-4M9 7l7-4M10 9l6-4" stroke={navy} strokeDasharray="2 1" />
        <path d="M6 4l6 6M8 7l-5 8M8 7l5 8M1 15h15M3 10q3-3 7 1" fill="none" stroke="#404040" />
        <path d="M6 9h4v4H6z" fill="#a0e8e8" />
    </>,
    cubes: <>
        <path d="M1 2l3-2 4 2v5l-4 2-3-3z" fill="#e8d800" stroke="#000" />
        <path d="M7 5l3-2 4 2v4l-3 2-4-2z" fill="#00c000" stroke="#000" />
        <path d="M2 8l3-2 4 2v6l-4 1-3-2z" fill="#0000c8" stroke="#000" />
        <path d="M9 10l3-1 3 1v5l-3 1-3-2z" fill="#e00000" stroke="#000" />
    </>,
    find: <>
        <path d="M5.5.5h10v7h-10zM.5 5.5h6v7h-6z" fill="#e8e8f0" stroke="#808098" />
        <path d="M8 2v3M10 3v2M12 1v4M3 7v4" stroke={navy} />
        <circle cx="9.5" cy="8.5" r="3" fill="#b0ffff" stroke="#505060" />
        <path d="M11.5 10.5l4 4" stroke="#303040" strokeWidth="2" />
    </>,
    money: <>
        <path d="M2.5 1.5h13v14h-13z" fill="#fff" stroke="#000" />
        <path d="M2 0h14v3H2z" fill="#000" />
        <path d="M1 7h6v2H1zM1 10h6v2H1zM1 13h6v2H1z" fill="#e8e000" stroke="#000" />
        <path d="M14 6h-4v3h4v3h-4M12 4v10" fill="none" stroke={navy} />
    </>,
    gridOff: <>
        <path d="M3 1h13v2H3zM6 4h10v11H5V9H0V6h6z" fill="#a0a0a0" />
        <path d="M8 6.5h7M8 9.5h7M8 12.5h7" stroke="#e8e8e8" strokeDasharray="2 1" />
    </>,
    columns: <>
        <path d="M.5 1.5h15v13H.5z" fill="#fff" stroke="#000" />
        <path d="M0 0h16v3H0z" fill="#000" />
        <path d="M1 4h9v10H1z" fill="#f0e860" />
        <path d="M10.5 3v12M5 5.5h4M5 8.5h4M5 11.5h4M1 5.5h3M1 8.5h3M1 11.5h3M12 6h3" stroke="#000" />
    </>,
    indicator: <>
        <path d="M15.500 2v13.500H1" fill="none" stroke="#c0c0c0" />
        <path d="M1.5 7V5M3.5 5V2M5.5 3V1M8.5 5V2M10.5 7V3M12.5 6V2M14.5 8V5" stroke="#00f" />
        <path d="M0 10l3 1 2 3 4-4 4 4 2-2" fill="none" stroke="#000" />
        <path d="M6 12l3-3 4 4" fill="none" stroke="#f00" />
    </>,
    upDown: <>
        <path d="M14.5 2v13.5H2" fill="none" stroke="#b0b0b0" />
        <path d="M4.5 6v7M2 11l2.5 3L7 11" fill="none" stroke="#a00000" />
        <path d="M10.5 13V5M8 8l2.5-3L13 8" fill="none" stroke={navy} />
    </>,
    stack: <>
        <path d="M5.5.5h10v10h-10zM3.5 2.5h10v10h-10zM.5 4.5h11v11H.5z" fill="#fff" stroke="#000" />
        <path d="M1 10l3-2 3 1 4-4" fill="none" stroke="#00f" />
        <path d="M4 11v4M8 14v-4M3 13h2M7 11h2" stroke="#a00000" />
    </>,
    formatWindow: <>
        <path d="M4.5 6.5h11v8h-11z" fill="#fff" stroke="#808080" />
        <path d="M0 6l5-5h8v5l-3 1-2 3H2z" fill="#d8d8d8" stroke="#303030" />
        <path d="M2 7l4-4M4 8l4-4M6 8l4-4" stroke="#303030" />
        <path d="M13 0h3v7h-3zM6 12h8v2H6z" fill={navy} />
    </>,
    formatSheet: <>
        <path d="M1.5 7.5h10v8h-10z" fill="#fff" stroke="#000" />
        <path d="M1 7h11v2H1z" fill={navy} />
        <path d="M2 5l4-4h7v4l-3 2H3z" fill="#d8d8d8" stroke="#303030" />
        <path d="M4 6l4-4M7 6l4-4" stroke="#303030" />
        <path d="M13 0h3v6h-3z" fill={navy} />
    </>,
    calendar: <>
        <path d="M1.5 3.5h12v10h-12z" fill="#fff" stroke="#000" />
        <path d="M1 1h14v4H1z" fill="#00a020" />
        <path d="M3 1v2M6 1v2M9 1v2M12 1v2" stroke="#000" />
        <path d="M3 7h3v4H3z" fill="none" stroke="#f00" />
        <circle cx="11.5" cy="11" r="4" fill="#fff" stroke="#000" />
        <path d="M11.5 8.5v3h2" fill="none" stroke="#000" />
    </>,
    clockBars: <>
        <circle cx="5.5" cy="5" r="4.5" fill="#fff" stroke="#404040" />
        <path d="M5.5 2v3.5h3" fill="none" stroke="#000" />
        <path d="M6.5 10v6M9.5 9v6M12.5 2v9M14.5 4v6M4.5 12h2" stroke={navy} />
    </>,
    blackChart: <>
        <path d="M0 0h14v14H0z" fill="#000" />
        <path d="M3.5 3v6M5.5 5v5M8.5 5v6M11.5 3v6" stroke="#00c000" />
        <path d="M15 0v15H0" fill="none" stroke="#f00" strokeWidth="2" />
    </>,
    ohlc: <>
        <path d="M14.5 1v14.5H1" fill="none" stroke="#b0b0b0" />
        <path d="M4 4v9M1 12h2M4 5h3M10 2v9M7 10h3M10 2h3" stroke={navy} strokeWidth="2" />
    </>,
    candles: <>
        <path d="M14.5 1v14.5H1" fill="none" stroke="#b0b0b0" />
        <path d="M3 4h4v7H3z" fill={navy} />
        <path d="M5 2v11M11 0v14" stroke={navy} />
        <path d="M9.5 2.5h3v9h-3z" fill="#fff" stroke={navy} />
    </>,
    narrow: <>
        <path d="M6.5 1v13M9.5 5v10" stroke="#0000c0" />
        <path d="M0 8.5h5M3 6l2 2.5L3 11M16 8.5h-5M13 6l-2 2.5 2 2.5" fill="none" stroke="#000" />
    </>,
    widen: <>
        <path d="M.5 1v11M15.5 5v10" stroke="#0000c0" />
        <path d="M3 8.5h4M5 6L2.5 8.5 5 11M9 8.5h4M11 6l2.5 2.5L11 11" fill="none" stroke="#000" />
    </>,
    zoomIn: <>
        <circle cx="6" cy="6" r="5" fill="#b8f0f0" stroke="#000" />
        <path d="M3 6h6M6 3v6" stroke="#000" strokeWidth="2" />
        <path d="M10 10l5 5" stroke={navy} strokeWidth="3" />
    </>,
    zoomOut: <>
        <circle cx="6" cy="6" r="5" fill="#f4f4f4" stroke="#a8a8a8" />
        <path d="M3 6h6" stroke="#a8a8a8" strokeWidth="2" />
        <path d="M10 10l5 5" stroke="#a8a8a8" strokeWidth="3" />
    </>,
    cursor: <path d="M4.5.5v12l3-3 2 5 2-1-2-4h4z" fill="#fff" stroke="#000" />,
    textChart: <>
        <path d="M0 1h13v12H0z" fill="#000" />
        <path d="M0 0h13v3H0z" fill="#00f" />
        <path d="M1 9l3-2 2 3 3-2" fill="none" stroke="#00e000" />
        <path d="M8 6h8v10H8z" fill="#f0f0f0" />
        <path d="M9 8h7M12.5 8v7M11 15h3" stroke="#000" strokeWidth="2" />
    </>,
    hammer: <>
        <path d="M3 15L13 4" stroke="#808000" strokeWidth="2" />
        <path d="M5 5l9 10" stroke="#000" strokeWidth="2" />
        <path d="M1 5l4-4 4 2-5 5z" fill="#606000" stroke="#000" />
        <path d="M12 1l2 3 2-1" fill="none" stroke="#000" strokeWidth="2" />
        <path d="M10 12l4 4" stroke="#c00000" strokeWidth="2" />
    </>,
    addSheet: <>
        <path d="M5.5 1.5h9v9h-9z" fill="#ffff60" stroke="#000" />
        <path d="M6 4.5h8M6 7.5h8M9.5 2v8M12.5 2v8" stroke="#606000" />
        <path d="M2.5 8.5h9v6h-9z" fill="#fff" stroke={navy} />
        <path d="M3 0v6M0 3h6" stroke="#00f" strokeWidth="2" />
    </>,
    noteOff: <>
        <path d="M2 1h12l1 2v9l-4 1v3l-4-3H3l-2-2V3z" fill="#a8a8a8" />
        <path d="M3 4h10M3 7h10M3 10h10" stroke="#f0f0f0" strokeDasharray="3 1" />
    </>,
    pitchfork: <path d="M0 15l7-7M9 0L6 4v4l1 1 4 1 4-4M8 7l7-7" fill="none" stroke="#000" />,
    vLines: <path d="M.5 1v14M3.5 1v14M6.5 1v14M10.5 1v14M15.5 1v14" stroke="#000" />,
    hLines: <path d="M0 1.5h16M0 6.5h16M0 10.5h16M0 14.5h16" stroke="#000" />,
    calc: <>
        <path d="M0 .5h16M0 2.5h16M0 7.5h4M12 7.5h4" stroke="#000" />
        <path d="M4.5 4.5h8v11h-8z" fill="#fff" stroke={navy} />
        <path d="M6 6h5v2H6z" fill={navy} />
        <path d="M6 10h5M6 12h5M6 14h5" stroke={navy} strokeDasharray="1 1" />
    </>,
    arcs: <path d="M1 13q0-8 8-8 5 1 5 8M4 13q0-5 4-5 3 1 3 5M7 12l9-9" fill="none" stroke="#000" />,
    fanDots: <path d="M0 14.5h15M0 14L14 1M0 14l15-7M2 12.5h12" fill="none" stroke="#000" strokeDasharray="2 1" />,
    steps: <path d="M0 14l4-4 2 4 2-3V1M8 1.5h8M9 3.5h7M9 5.5h7M9 8.5h7" fill="none" stroke="#000" />,
    timeZones: <path d="M0 2l6 6M7.5 1v14M11.5 1v14M14.5 1v14" stroke="#000" />,
    fan: <path d="M0 14.5h16M0 14L12 1M0 14l15-7M0 14l15-3" fill="none" stroke="#000" />,
    extend: <path d="M1 7.5l4-3v2h6v-2l4 3-4 3v-2H5v2z" fill="#000" />,
    parallel: <path d="M1 11L10 1M3 13L14 2M6 15l9-10" stroke="#000" />,
    cycle: <path d="M.5 14V8Q1 .5 8 .5T15.5 8v6M1 11q2-3 4 0v3M5 11q3-3 6 0v3M11 11q2-3 4 0" fill="none" stroke="#000" />,
    pencil: <>
        <path d="M0 14.5h8" stroke="#000" />
        <path d="M8 14l1-5 4-8 3 1-4 9z" fill="#f0e000" stroke="#000" />
        <path d="M13 0h3v3h-3z" fill="#c00000" />
    </>,
    arc: <path d="M2 14q10 0 11-12" fill="none" stroke="#000" />,
    down: <path d="M7 3h3v5h2l-3.5 5L5 8h2z" fill="#f00" />,
    up: <path d="M7 13h3V8h2L8.5 3 5 8h2z" fill="#00f" />,
    ellipse: <path d="M5.5 2.5h5l4 4v4l-4 3h-5l-4-3v-4z" fill="none" stroke="#000" />,
    square: <path d="M1.5 1.5h13v13h-13z" fill="none" stroke="#000" />,
};

const ToolButton = ({ name, pressed = false }: { name: string; pressed?: boolean }) => (
    <button
        type="button"
        aria-label={name}
        className={`flex h-[22px] w-[23px] shrink-0 items-center justify-center ${pressed ? "border border-[#a0a0a0] border-r-white border-b-white bg-[#f8f8f8]" : ""}`}
    >
        {name === "text" ? (
            <span className="text-[11px] leading-none text-black">abc</span>
        ) : (
            <svg className="size-4 shrink-0" viewBox="0 0 16 16" shapeRendering="crispEdges" aria-hidden="true">
                {icons[name]}
            </svg>
        )}
    </button>
);

const Separator = () => (
    <div className="flex h-[22px] w-[8px] shrink-0 justify-center">
        <span className="w-px bg-[#a0a0a0]" />
    </div>
);

const Grip = ({ className = "" }: { className?: string }) => (
    <div className={`flex h-[24px] w-[14px] shrink-0 justify-end pr-[3px] ${className}`}>
        <span className="w-0 border-l-2 border-dotted border-[#b0b0b0]" />
    </div>
);

const ToolGroup = ({ groups }: { groups: string[][] }) => (
    <>
        {groups.map((group, i) => (
            <div key={i} className="flex shrink-0 items-center">
                {i > 0 && <Separator />}
                {group.map((name) => <ToolButton key={name} name={name} pressed={name === "cursor"} />)}
            </div>
        ))}
    </>
);

const Toolbar = () => (
    <div className="flex h-[32px] items-center overflow-hidden border-t border-b-2 border-t-[#a0a0a0] border-b-[#6e6e6e] bg-[#f0f0f0]">
        <Grip />
        <ToolGroup groups={[
            ["new", "open", "saveAll", "mail", "folderUp"],
            ["window", "print"],
            ["insertBack", "insertFlags", "lock", "dish", "cubes"],
        ]} />
        <Separator />
        <div className="relative h-[23px] w-[138px] shrink-0">
            <select aria-label="Symbol" className="size-full appearance-none rounded-[2px] border border-[#e0e4ec] bg-white" />
            <svg className="pointer-events-none absolute top-[9px] right-[5px] h-[5px] w-[10px]" viewBox="0 0 10 5" aria-hidden="true"><path d="M0 0h10L5 5z" /></svg>
        </div>
        <button type="button" aria-label="Go" className="flex h-[22px] w-[16px] shrink-0 items-center justify-center">
            <svg className="h-[10px] w-[5px]" viewBox="0 0 5 10" aria-hidden="true"><path d="M0 0v10l5-5z" /></svg>
        </button>
        <div className="pl-2"><ToolButton name="find" /></div>
        <Grip className="ml-[21px]" />
        <ToolGroup groups={[
            ["money", "gridOff", "columns"],
            ["indicator", "upDown", "stack"],
            ["formatWindow", "formatSheet"],
            ["calendar", "clockBars", "blackChart", "ohlc", "candles"],
            ["narrow", "widen"],
            ["zoomIn", "zoomOut"],
            ["cursor", "textChart"],
            ["hammer"],
            ["addSheet"],
            ["noteOff"],
        ]} />
        <Grip className="ml-[6px]" />
        <ToolGroup groups={[
            ["pitchfork", "vLines", "hLines", "calc", "arcs", "fanDots", "steps", "timeZones", "fan", "extend", "parallel", "cycle", "pencil"],
            ["arc", "down", "up", "ellipse", "square", "text"],
        ]} />
    </div>
);

const TitleBar = () => (
    <header className="flex h-[28px] items-start justify-between border-b border-[#3c444e] bg-[linear-gradient(90deg,#93a0b2_0%,#a9b0bb_12%,#9aa2ac_21%,#b4bcc4_24%,#b9c2cb_37%,#c6d9ea_40%,#cfe4f8_52%,#c2d8ee_62%,#d4e8fa_75%,#c8dff4_77%,#1b2e44_79%,#16263a_91%,#3f4b5a_94%,#505c6a_100%)]">
        <div className="flex h-[28px] items-center pl-px">
            <svg className="h-[24px] w-[19px]" viewBox="0 0 19 24" aria-hidden="true">
                <path d="M2 22Q0 12 5 6q4-5 12-5 1 8-4 14-3 4-9 8z" fill="#1560e8" />
                <path d="M3 20Q3 11 8 6q4-3 8-3" fill="none" stroke="#50b0ff" strokeWidth="2" />
                <path d="M9 9l4 5h-2v6H7v-6H5z" fill="#d8e0f0" stroke="#8090b0" />
            </svg>
            <h1 className="pt-[2px] pl-[5px] font-['Noto_Sans',sans-serif] text-[14px] leading-[20px] whitespace-pre text-black">
                TradeStation 8.1 - SP500_NASDAQ - SP500 2 Giorni - [Chart Analysis - GS:S&amp;P500  15 min  [CME] S&amp;P500 FUT]
            </h1>
        </div>
        <div className="mr-[3px] flex h-[25px] rounded-b-[4px] border border-t-0 border-[#98a3b0] bg-[#55616f]">
            <button type="button" aria-label="Minimize" className="flex w-[39px] items-center justify-center border-r border-[#98a3b0]">
                <svg className="mt-[10px] h-[6px] w-[17px]" viewBox="0 0 17 6" aria-hidden="true"><path d="M.5.5h16v4H.5z" fill="#fff" stroke="#444c58" /></svg>
            </button>
            <button type="button" aria-label="Restore" className="flex w-[36px] items-center justify-center border-r border-[#98a3b0]">
                <svg className="h-[18px] w-[20px]" viewBox="0 0 20 18" fillRule="evenodd" stroke="#444c58" aria-hidden="true">
                    <path d="M5.5.5h14v13h-14z" fill="#fff" />
                    <path d="M.5 4.5h14v13H.5zM5.5 8.5h5v4h-5z" fill="#fff" />
                </svg>
            </button>
            <button type="button" aria-label="Close" className="flex w-[61px] items-center justify-center">
                <svg className="h-[16px] w-[19px]" viewBox="0 0 19 16" aria-hidden="true"><path d="M1 .5h5l3.5 4 3.5-4h5L12.500 8l5.500 7.500h-5l-3.500-4-3.500 4H1L6.500 8z" fill="#fff" stroke="#444c58" /></svg>
            </button>
        </div>
    </header>
);

const menuItems = ["File", "Edit", "View", "Insert", "Format", "Drawing", "Window", "Help"];

const MenuBar = () => (
    <nav className="flex h-[30px] items-center justify-between bg-[linear-gradient(180deg,#ffffff_0%,#eceff8_30%,#d5dbec_36%,#dde3f4_90%,#b8bccb_94%,#f4f6fb_100%)]">
        <div className="flex items-center">
            <svg className="ml-[7px] size-[19px]" viewBox="0 0 19 19" shapeRendering="crispEdges" aria-hidden="true">
                <path d="M0 0h19v18H0z" fill="#001008" />
                <path d="M0 0h19v2H0z" fill="#00c" />
                <path d="M1 12l2-5 2 3 3-5 2 3 3-4 2 4 1-4" fill="none" stroke="#00b020" />
                <path d="M0 14.5h19M0 17h19M17.5 3v14" stroke="#801010" />
            </svg>
            <ul className="flex gap-[15px] pt-[2px] pl-[8px] text-[14px] leading-[20px] text-[#7c7f86]">
                {menuItems.map((item) => (
                    <li key={item}><button type="button">{item}</button></li>
                ))}
            </ul>
        </div>
        <div className="mr-px flex gap-[2px]">
            {["Minimize chart", "Restore chart", "Close chart"].map((label, i) => (
                <button key={label} type="button" aria-label={label} className="flex h-[27px] w-[22px] items-center justify-center border border-[#a3b1c5] bg-[#d9e8f8]">
                    <svg className="size-[9px]" viewBox="0 0 9 9" fill="none" stroke="#8494a8" shapeRendering="crispEdges" aria-hidden="true">
                        {i === 0 && <path d="M1 7h6" strokeWidth="2" />}
                        {i === 1 && <path d="M3.5 3V.5h5v4H6M.5 3.5h5v5h-5zM3 1.5h5M1 4.5h4" />}
                        {i === 2 && <path d="M1 1l6 7M7 1L1 8" strokeWidth="2" />}
                    </svg>
                </button>
            ))}
        </div>
    </nav>
);

const tabs = [
    { name: "SP500 100", width: "w-[82px]" },
    { name: "SP500 TF240", width: "w-[98px]" },
    { name: "SP500_TF120", width: "w-[101px]" },
    { name: "SP500_TF60", width: "w-[94px]" },
    { name: "SP500_TF30", width: "w-[93px]" },
    { name: "SP500 2 Giorni", width: "w-[106px]" },
    { name: "1_2 GG SP500", width: "w-[103px]" },
    { name: "ANNUALE Indici_2", width: "w-[125px]" },
    { name: "No PREZZI 1", width: "w-[93px]" },
];
const activeTab = 5;

const tabEdge = (i: number) => {
    if (i === 0) return "M1 0L6 17";
    if (i === activeTab + 1) return "M8 0L3 17M5 9L8 17";
    if (i === tabs.length) return "M8 0L2 17";
    return "M1 0L7 17M4 9L1 17";
};

const TabEdge = ({ index }: { index: number }) => (
    <svg className="h-[17px] w-[8px] shrink-0" viewBox="0 0 8 17" fill="none" stroke="#000" aria-hidden="true">
        <path d={tabEdge(index)} />
    </svg>
);

const navArrows = ["M4 2v8M10 2L6 6l4 4z", "M8 2L4 6l4 4z", "M5 2l4 4-4 4z", "M3 2l4 4-4 4zM9 2v8"];

const WorkspaceTabs = () => (
    <div className="flex h-[18px] bg-[#f0f0f0] font-['Liberation_Sans',Arial,sans-serif]">
        <div className="flex">
            {navArrows.map((d, i) => (
                <button key={d} type="button" aria-label={["First", "Previous", "Next", "Last"][i]} className="flex h-[17px] w-[17px] items-center justify-center border border-white border-r-[#808080] border-b-[#808080]">
                    <svg className="size-3 shrink-0" viewBox="0 0 12 12" fill="#505050" stroke="#505050" aria-hidden="true"><path d={d} /></svg>
                </button>
            ))}
        </div>
        <div className="flex flex-1 border-t border-black" role="tablist">
            {tabs.map((tab, i) => (
                <div key={tab.name} className={`flex h-[17px] shrink-0 border-b border-black ${tab.width} ${i === activeTab ? "bg-white" : ""}`}>
                    <TabEdge index={i} />
                    <button
                        type="button"
                        role="tab"
                        aria-selected={i === activeTab}
                        className={`flex-1 pr-[2px] text-center text-[12px] leading-[16px] whitespace-nowrap text-black ${i === activeTab ? "font-bold" : ""}`}
                    >
                        {tab.name}
                    </button>
                </div>
            ))}
            <TabEdge index={tabs.length} />
        </div>
    </div>
);

const statusCells = [
    { text: "Acct:", className: "w-[52px] text-[#202020]" },
    { text: "Open Psns:", className: "w-[91px] text-[#202020]" },
    { text: "DT BP:", className: "w-[63px] text-[#202020]" },
    { text: "Purch Pwr:", className: "w-[87px] text-[#202020]" },
    { text: "Closed P/L:", className: "w-[93px] text-[#202020]" },
    { text: "RT TE:", className: "w-[60px] text-[#202020]" },
    { text: "Open P/L:", className: "w-[84px] text-[#202020]" },
    { text: "ORDER BAR", className: "w-[88px] text-[#109010]" },
    { text: "MACROS", className: "w-[71px] text-[#109010]" },
];

const StatusBar = () => (
    <footer className="flex h-[22px] items-center justify-between border-t border-b border-t-[#9a9a9a] border-b-[#5a6478] bg-[#f1eded] text-[14px] leading-[20px] whitespace-nowrap text-[#202020]">
        <span className="pl-[2px]">For Help, press F1</span>
        <div className="flex items-center">
            {statusCells.map((cell) => (
                <span key={cell.text} className={`h-[20px] shrink-0 border-r border-[#d0cccc] pl-[4px] ${cell.className}`}>{cell.text}</span>
            ))}
            <span className="flex h-[20px] w-[16px] items-start justify-center border-r border-[#d0cccc] pt-[2px]">
                <svg className="size-[12px]" viewBox="0 0 12 12" role="img" aria-label="Recording">
                    <circle cx="6" cy="6" r="5" fill="#c80000" stroke="#500000" />
                    <circle cx="4.5" cy="4" r="1.5" fill="#ffb0b0" />
                </svg>
            </span>
            <time className="w-[123px] pl-[4px]">28/01/2022 14:58</time>
        </div>
    </footer>
);

const ScrollBar = () => (
    <div className="flex h-[23px] items-center justify-between border-y border-[#fafafa] bg-[#ececec] pr-[10px] pl-[8px]">
        <button type="button" aria-label="Scroll left">
            <svg className="h-[9px] w-[5px]" viewBox="0 0 5 9" aria-hidden="true"><path d="M5 0v9L0 4.5z" fill="#303030" /></svg>
        </button>
        <div className="flex items-center gap-[9px]">
            <button type="button" aria-label="Scroll position" className="flex h-[19px] w-[18px] items-center justify-center gap-[2px] rounded-[2px] border border-[#8e8e8e] bg-[linear-gradient(180deg,#f6f6f6_0%,#e4e4e4_50%,#cfcfcf_51%,#dcdcdc_100%)]">
                <span className="h-[9px] w-[2px] bg-[#6c6c6c]" />
                <span className="h-[9px] w-[2px] bg-[#6c6c6c]" />
                <span className="h-[9px] w-[2px] bg-[#6c6c6c]" />
            </button>
            <button type="button" aria-label="Scroll right">
                <svg className="h-[9px] w-[5px]" viewBox="0 0 5 9" aria-hidden="true"><path d="M0 0v9l5-4.5z" fill="#505050" /></svg>
            </button>
        </div>
    </div>
);

interface ChartPanelProps {
    readings: Reading[];
    tags: Tag[];
    readingsClass?: string;
    axisClass?: string;
    children: ReactNode;
}

const ChartPanel = ({ readings, tags, readingsClass = "leading-[19px]", axisClass = "", children }: ChartPanelProps) => (
    <section className="flex">
        <div className="min-w-0 flex-1">
            <Readings items={readings} className={readingsClass} />
            {children}
        </div>
        <Axis tags={tags} className={axisClass} />
    </section>
);

const App = () => {
    return (
        <div className="min-h-screen overflow-hidden bg-[#f0f0f0] font-['Open_Sans','Noto_Sans',sans-serif]">
            <TitleBar />
            <MenuBar />
            <Toolbar />
            <main className="border-r-2 border-[#e4e4e4] bg-[#050608] font-['Liberation_Sans',Arial,sans-serif] shadow-[inset_2px_0_0_#8a8a8a]">
                <ChartPanel readings={priceReadings} tags={priceTags} readingsClass="pt-[2px] leading-[19px]" axisClass="border-b">
                    <PricePlot />
                </ChartPanel>
                <ChartPanel readings={leoReadings} tags={leoTags} axisClass="border-b">
                    <LeoPlot />
                </ChartPanel>
                <ChartPanel readings={cciReadings} tags={cciTags}>
                    <CciPlot />
                </ChartPanel>
                <div className="border-t border-white">
                    <TimeAxis />
                </div>
            </main>
            <ScrollBar />
            <WorkspaceTabs />
            <StatusBar />
        </div>
    );
};

export default App
